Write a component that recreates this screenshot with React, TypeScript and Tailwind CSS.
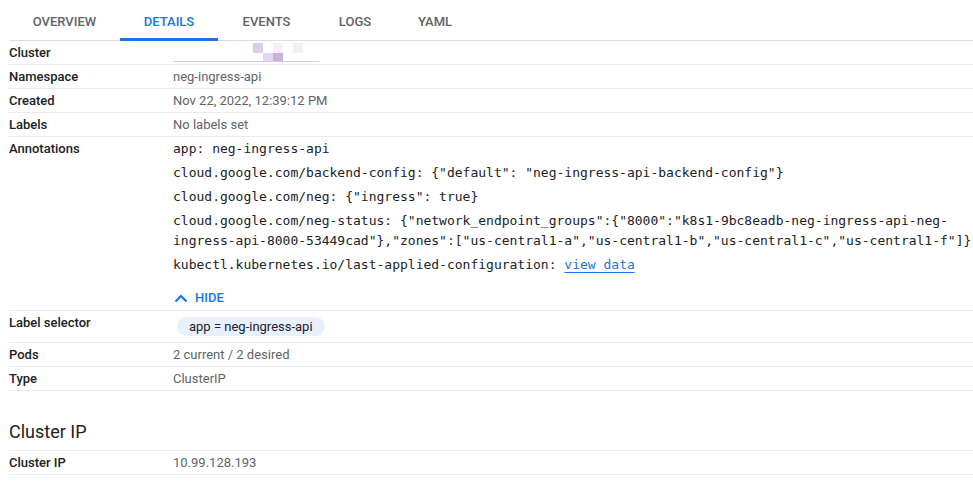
import React from "react";

const tabs = [
  { label: "OVERVIEW", w: "w-[111px]" },
  { label: "DETAILS", w: "w-[98px]", active: true },
  { label: "EVENTS", w: "w-[97px]" },
  { label: "LOGS", w: "w-[80px]" },
  { label: "YAML", w: "w-[80px]" },
];

function Row({ label, children }: { label: string; children: React.ReactNode }) {
  return (
    <div className="flex border-b border-[#e8eaed] h-6 leading-[23px]">
      <div className="w-[164px] shrink-0 font-medium text-[#202124]">{label}</div>
      <div className="text-[#5f6368]">{children}</div>
    </div>
  );
}

function Redacted() {
  return (
    <div className="relative h-[23px] w-[146px]">
      <div className="absolute left-[80px] top-[2px] w-[10px] h-[10px] bg-[#dccbea]" />
      <div className="absolute left-[100px] top-[2px] w-[10px] h-[10px] bg-[#f6f0fa]" />
      <div className="absolute left-[120px] top-[2px] w-[10px] h-[10px] bg-[#f3eef8]" />
      <div className="absolute left-[90px] top-[12px] w-[10px] h-[8px] bg-[#e4d6ef]" />
      <div className="absolute left-[100px] top-[12px] w-[10px] h-[8px] bg-[#c9b0dd]" />
      <div className="absolute left-0 top-[20px] w-[146px] h-px bg-[#d8c8e6]" />
    </div>
  );
}

export default function App() {
  const mono = "font-['DejaVu_Sans_Mono','Liberation_Mono',monospace] text-[13px] leading-5 text-[#202124]";
  return (
    <div className="bg-white min-h-screen pl-[9px] font-['Roboto','Noto_Sans',sans-serif] text-[13px] text-[#202124]">
      {/* Tabs */}
      <div className="flex h-[41px] border-b border-[#dadce0]">
        {tabs.map((t) => (
          <div
            key={t.label}
            className={`${t.w} flex items-center justify-center pt-[3px] font-medium text-[13px] relative ${
              t.active ? "text-[#1a73e8]" : "text-[#5f6368]"
            }`}
          >
            {t.label}
            {t.active && <div className="absolute left-0 right-0 -bottom-px h-[3px] bg-[#1a73e8]" />}
          </div>
        ))}
      </div>

      <Row label="Cluster">
        <Redacted />
      </Row>
      <Row label="Namespace">neg-ingress-api</Row>
      <Row label="Created">Nov 22, 2022, 12:39:12 PM</Row>
      <Row label="Labels">No labels set</Row>

      {/* Annotations */}
      <div className="flex border-b border-[#e8eaed]">
        <div className="w-[164px] shrink-0 font-medium leading-[23px]">Annotations</div>
        <div className="pt-[2px] pb-[2px]">
          <div className="flex flex-col gap-1">
            <div className={mono}>app: neg-ingress-api</div>
            <div className={mono}>
              cloud.google.com/backend-config: {"{"}"default": "neg-ingress-api-backend-config"{"}"}
            </div>
            <div className={mono}>cloud.google.com/neg: {"{"}"ingress": true{"}"}</div>
            <div className={`${mono} whitespace-nowrap`}>
              cloud.google.com/neg-status: {"{"}"network_endpoint_groups":{"{"}"8000":"k8s1-9bc8eadb-neg-ingress-api-neg-
              <br />
              ingress-api-8000-53449cad"{"}"},"zones":["us-central1-a","us-central1-b","us-central1-c","us-central1-f"]{"}"}
            </div>
            <div className={mono}>
              kubectl.kubernetes.io/last-applied-configuration:{" "}
              <span className="text-[#1a73e8] underline underline-offset-[3px]">view data</span>
            </div>
          </div>
          <div className="mt-[13px] h-5 flex items-center gap-[7px] text-[#1a73e8] font-medium">
            <svg width="14" height="9" viewBox="0 0 14 9" className="ml-[1px]">
              <polyline points="1.5,7.5 7,2 12.5,7.5" fill="none" stroke="#1a73e8" strokeWidth="2.2" />
            </svg>
            HIDE
          </div>
        </div>
      </div>

      {/* Label selector */}
      <div className="flex border-b border-[#e8eaed] h-8">
        <div className="w-[164px] shrink-0 font-medium leading-[23px]">Label selector</div>
        <div className="pt-[6px]">
          <div className="ml-[4px] h-[19px] px-3 rounded-full bg-[#e8f0fe] flex items-center text-[#202124]">
            app = neg-ingress-api
          </div>
        </div>
      </div>

      <Row label="Pods">2 current / 2 desired</Row>
      <Row label="Type">ClusterIP</Row>

      <div className="border-b border-[#e8eaed] pt-[29px] pb-[6px] text-[18px] leading-6 text-[#202124]">
        Cluster IP
      </div>
      <Row label="Cluster IP">10.99.128.193</Row>
    </div>
  );
}
